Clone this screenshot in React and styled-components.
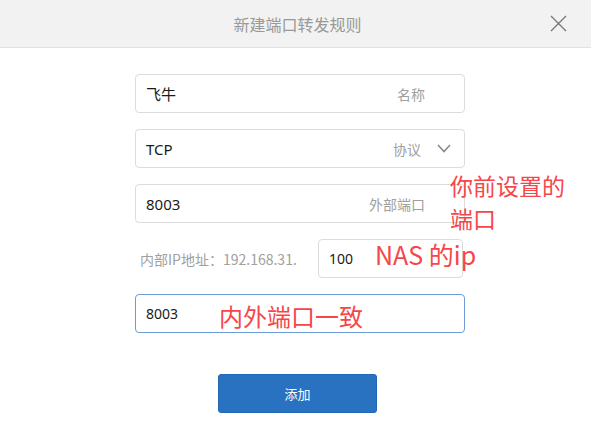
import React from "react";
import styled, { createGlobalStyle } from "styled-components";

const Global = createGlobalStyle`
  html, body { margin: 0; padding: 0; background: #fff; }
  body { font-family: "Noto Sans", "Noto Sans CJK SC", sans-serif; }
  * { box-sizing: border-box; }
`;

const Page = styled.div`
  position: relative;
  width: 591px;
  height: 443px;
  background: #fff;
  overflow: hidden;
`;

const Header = styled.div`
  height: 48px;
  background: #f2f2f2;
  border-bottom: 1px solid #e2e2e2;
  display: flex;
  align-items: center;
  justify-content: center;
  position: relative;
`;

const Title = styled.div`
  font-family: "Noto Sans CJK SC", sans-serif;
  font-size: 16px;
  color: #999;
  margin-left: 4px;
  margin-top: 1px;
`;

const Close = styled.button`
  position: absolute;
  right: 24px;
  top: 14px;
  width: 18px;
  height: 18px;
  padding: 0;
  border: 0;
  background: none;
  display: flex;
  align-items: center;
  justify-content: center;
`;

const Form = styled.div`
  width: 330px;
  margin-left: 135px;
  padding-top: 26px;
  display: flex;
  flex-direction: column;
  gap: 16px;
`;

const Field = styled.div`
  height: 39px;
  border: 1px solid ${(p) => (p.$focused ? "#6b9bd5" : "#dcdcdc")};
  border-radius: 4px;
  display: flex;
  align-items: center;
  padding: 0 ${(p) => p.$pr || 39}px 0 10px;
  width: ${(p) => p.$width || "auto"};
`;

const Value = styled.span`
  flex: 1;
  font-family: "Noto Sans", "Noto Sans CJK SC", sans-serif;
  font-size: ${(p) => p.$size || 15}px;
  color: #1a1a1a;
`;

const Hint = styled.span`
  font-family: "Noto Sans CJK SC", sans-serif;
  font-size: 14px;
  color: #a0a0a0;
`;

const Chevron = styled.svg`
  margin-left: 16px;
  flex: none;
`;

const IpRow = styled.div`
  display: flex;
  align-items: center;
  justify-content: space-between;
  padding: 0 2px 0 5px;
`;

const IpLabel = styled.span`
  font-family: "Noto Sans CJK SC", sans-serif;
  font-size: 14px;
  color: #a0a0a0;
`;

const SubmitWrap = styled.div`
  display: flex;
  padding-left: 83px;
  margin-top: 25px;
`;

const Submit = styled.button`
  width: 159px;
  height: 39px;
  border: 1px solid #2067b5;
  border-radius: 3px;
  background: #2872c1;
  color: #fff;
  font-family: "Noto Sans CJK SC", sans-serif;
  font-size: 13px;
`;

const Note = styled.div`
  position: absolute;
  left: ${(p) => p.$x}px;
  top: ${(p) => p.$y}px;
  font-family: "Noto Sans CJK SC", "Noto Sans", sans-serif;
  font-size: ${(p) => p.$size}px;
  line-height: ${(p) => p.$lh || 1.2};
  color: #f5474a;
  white-space: pre;
`;

export default function App() {
  return (
    <Page>
      <Global />
      <Header>
        <Title>新建端口转发规则</Title>
        <Close aria-label="close">
          <svg width="17" height="17" viewBox="0 0 17 17">
            <path d="M1 1L16 16M16 1L1 16" stroke="#7a7a7a" strokeWidth="1.4" fill="none" />
          </svg>
        </Close>
      </Header>
      <Form>
        <Field>
          <Value>飞牛</Value>
          <Hint>名称</Hint>
        </Field>
        <Field $pr={13}>
          <Value>TCP</Value>
          <Hint>协议</Hint>
          <Chevron width="14" height="9" viewBox="0 0 14 9">
            <path d="M1 1L7 7.5L13 1" stroke="#8a8a8a" strokeWidth="1.6" fill="none" />
          </Chevron>
        </Field>
        <Field>
          <Value>8003</Value>
          <Hint>外部端口</Hint>
        </Field>
        <IpRow>
          <IpLabel>内部IP地址：192.168.31.</IpLabel>
          <Field $width="145px">
            <Value $size={14}>100</Value>
          </Field>
        </IpRow>
        <Field $focused>
          <Value $size={14}>8003</Value>
        </Field>
        <SubmitWrap>
          <Submit>添加</Submit>
        </SubmitWrap>
      </Form>
      <Note $x={450} $y={169} $size={23} $lh="33px">{"你前设置的\n端口"}</Note>
      <Note $x={375} $y={239} $size={25}>NAS 的ip</Note>
      <Note $x={219} $y={302} $size={24}>内外端口一致</Note>
    </Page>
  );
}
